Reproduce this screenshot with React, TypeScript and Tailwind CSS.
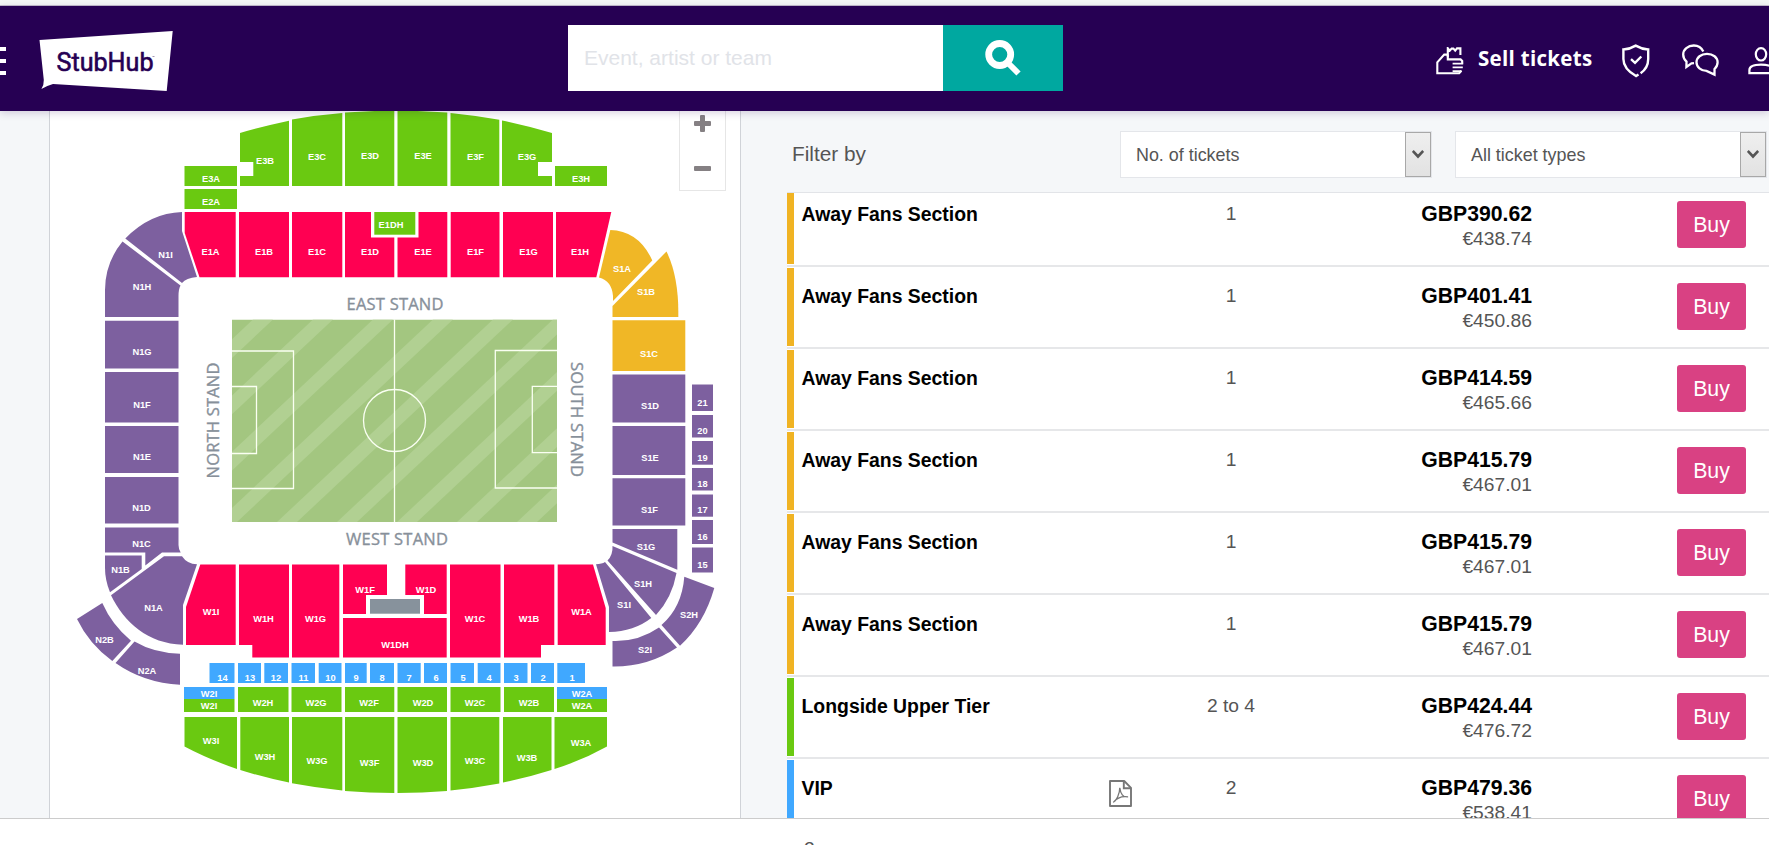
interface Section {
  name: string;
  d: string;
  x: number;
  y: number;
}

interface Listing {
  section: string;
  quantity: string;
  price: string;
  converted: string;
  color: string;
  pdf?: boolean;
}

const greenSections: Section[] = [
  { name: "E3A", d: "M184.5 166H237V186H184.5Z", x: 211, y: 182 },
  { name: "E2A", d: "M184.5 189H237V209H184.5Z", x: 211, y: 205 },
  { name: "E3B", d: "M240 133Q264 126 289 120.7V186H240V176H253.3V162H240Z", x: 265, y: 164 },
  { name: "E3C", d: "M292 119.5Q317 115 342.3 113V186H292Z", x: 317, y: 160 },
  { name: "E3D", d: "M345 112.5L394.3 110V186H345Z", x: 370, y: 159 },
  { name: "E3E", d: "M397.5 110L447.3 112.5V186H397.5Z", x: 423, y: 159 },
  { name: "E3F", d: "M450.5 113Q475 115.5 499.3 119.7V186H450.5Z", x: 475.5, y: 160 },
  { name: "E3G", d: "M502 120.5Q528 126 552 133V162H538V176H552V186H502Z", x: 527, y: 160 },
  { name: "E3H", d: "M555 166H607V186H555Z", x: 581, y: 182 },
  { name: "W2I", d: "M184 699H234.5V712H184Z", x: 209, y: 709 },
  { name: "W2H", d: "M238 687H288.5V712H238Z", x: 263, y: 706 },
  { name: "W2G", d: "M291.5 687H341.5V712H291.5Z", x: 316, y: 706 },
  { name: "W2F", d: "M345 687H394.3V712H345Z", x: 369, y: 706 },
  { name: "W2D", d: "M397.5 687H447V712H397.5Z", x: 423, y: 706 },
  { name: "W2C", d: "M450.5 687H500.5V712H450.5Z", x: 475, y: 706 },
  { name: "W2B", d: "M504 687H554V712H504Z", x: 529, y: 706 },
  { name: "W2A", d: "M557 699H607V712H557Z", x: 582, y: 709 },
  { name: "W3I", d: "M184.5 717H237V769Q208 759 184.5 746.5Z", x: 211, y: 744 },
  { name: "W3H", d: "M240.3 717H289V782.5Q264 777.5 240.3 770Z", x: 265, y: 760 },
  { name: "W3G", d: "M292 717H342.3V790.5Q317 788 292 783.3Z", x: 317, y: 764 },
  { name: "W3F", d: "M345 717H394.3V793Q370 793 345 791Z", x: 369.5, y: 766 },
  { name: "W3D", d: "M397.5 717H447V791Q422 793 397.5 793Z", x: 423, y: 766 },
  { name: "W3C", d: "M450.5 717H499.3V783.5Q475 788 450.5 790.5Z", x: 475, y: 764 },
  { name: "W3B", d: "M503 717H551.5V770Q528 777.5 503 782.5Z", x: 527, y: 761 },
  { name: "W3A", d: "M554.5 717H607V746.5Q583 760 554.5 769Z", x: 581, y: 746 },
];

const redSections: Section[] = [
  { name: "E1A", d: "M184.7 212H235.7V277.3H199.5L184.7 233Z", x: 210.5, y: 255 },
  { name: "E1B", d: "M239 212H289V277.3H239Z", x: 264, y: 255 },
  { name: "E1C", d: "M292 212H342.3V277.3H292Z", x: 317, y: 255 },
  { name: "E1D", d: "M345 212H371V237.5H394.3V277.3H345Z", x: 370, y: 255 },
  { name: "E1E", d: "M418.5 212H447.3V277.3H397.5V237.5H418.5Z", x: 423, y: 255 },
  { name: "E1F", d: "M450.7 212H499.5V277.3H450.7Z", x: 475.5, y: 255 },
  { name: "E1G", d: "M503 212H553V277.3H503Z", x: 528.5, y: 255 },
  { name: "E1H", d: "M556 212H611.3L596.3 277.3H556Z", x: 580, y: 255 },
  { name: "W1I", d: "M200.3 564.5H235.7V645H186V607Z", x: 211, y: 615 },
  { name: "W1H", d: "M239 564.5H289V657.5H252.3V645H239Z", x: 263.5, y: 622 },
  { name: "W1G", d: "M292 564.5H339.3V657.5H292Z", x: 315.5, y: 622 },
  { name: "W1F", d: "M343 564.5H387V595H366V614H343Z", x: 365, y: 593 },
  { name: "W1D", d: "M405.3 564.5H446.7V614H424V595H405.3Z", x: 426, y: 593 },
  { name: "W1DH", d: "M343 618H446.7V657.5H343Z", x: 395, y: 648 },
  { name: "W1C", d: "M450 564.5H500.5V657.5H450Z", x: 475, y: 622 },
  { name: "W1B", d: "M504 564.5H554.3V645H541V657.5H504Z", x: 529, y: 622 },
  { name: "W1A", d: "M557.7 564.5H593L605.7 608V645H557.7Z", x: 581.5, y: 615 },
];

const purpleSections: Section[] = [
  { name: "N1I", d: "M125.3 238.5Q150 213 182 212V231L197 277Q186 278 182 283Z", x: 165.5, y: 258 },
  { name: "N1H", d: "M122.5 241.5L180.5 285.5Q178.5 289 178.5 296V317H105V290Q105 263 122.5 241.5Z", x: 142, y: 290 },
  { name: "N1G", d: "M105 320.7H178.5V368.5H105Z", x: 142, y: 355 },
  { name: "N1F", d: "M105 372H178.5V422.5H105Z", x: 142, y: 408 },
  { name: "N1E", d: "M105 426H178.5V473H105Z", x: 142, y: 460 },
  { name: "N1D", d: "M105 477H178.5V523.5H105Z", x: 141.5, y: 511 },
  { name: "N1C", d: "M105 527.5H178.5V545Q178.5 549 180.7 552.5H162L145.3 565.5V552.5H105Z", x: 141.5, y: 547 },
  { name: "N1B", d: "M105 555.5H141.7V569L110 592.3Q105 580 105 568Z", x: 120.5, y: 573 },
  { name: "N1A", d: "M111 595.3L164 556.3H182Q187 564 197 564.3L183 605V644.7C148 644 124 622 111 595.3Z", x: 153.5, y: 611 },
  { name: "N2B", d: "M102.3 603L77 619Q89 644 112.3 661L131 640.7Q112 625 102.3 603Z", x: 104.5, y: 643 },
  { name: "N2A", d: "M134.5 641.5Q154 653 180 653.7V684.7Q144 683 115.5 663Z", x: 147, y: 674 },
  { name: "S1D", d: "M612.5 374.5H685.3V422.5H612.5Z", x: 650, y: 409 },
  { name: "S1E", d: "M612.5 426H685.3V475H612.5Z", x: 650, y: 461 },
  { name: "S1F", d: "M612.5 478.3H685.3V525.5H612.5Z", x: 649.5, y: 513 },
  { name: "S1G", d: "M612.5 529H677.3V569.7L612.5 542.5Z", x: 646, y: 550 },
  { name: "S1H", d: "M612.5 546L676.5 573Q672 598 656 615L607.5 560.5Q613 555 612.5 546Z", x: 643, y: 587 },
  { name: "S1I", d: "M596 564.3Q602 564 605 562L651.3 618Q634 631.5 609 632V607Z", x: 624, y: 608 },
  { name: "S2H", d: "M684.3 576.7L714.3 588Q704 624 680 645.7L661.5 625Q682 607 684.3 576.7Z", x: 689, y: 618 },
  { name: "S2I", d: "M612.5 641Q638 642 659 627.5L677 647.5Q648 667 612.5 666.5Z", x: 645, y: 653 },
  { name: "21", d: "M692 384.5H713V411H692Z", x: 702.5, y: 406 },
  { name: "20", d: "M692 415H713V437.5H692Z", x: 702.5, y: 434 },
  { name: "19", d: "M692 441H713V464.7H692Z", x: 702.5, y: 461 },
  { name: "18", d: "M692 468H713V490.5H692Z", x: 702.5, y: 487 },
  { name: "17", d: "M692 494.5H713V516.7H692Z", x: 702.5, y: 513 },
  { name: "16", d: "M692 520H713V544H692Z", x: 702.5, y: 540 },
  { name: "15", d: "M692 547.5H713V572.5H692Z", x: 702.5, y: 568 },
];

const orangeSections: Section[] = [
  { name: "S1A", d: "M610.3 230Q639 231 652.3 260.5L613 301V296Q612 281 599 277.5Z", x: 622, y: 272 },
  { name: "S1B", d: "M666.5 251.5Q679 277 678.3 317H612.5V306Z", x: 646, y: 295 },
  { name: "S1C", d: "M612.5 320.3H685.3V371H612.5Z", x: 649, y: 357 },
];

const blueSections: Section[] = [
  { name: "14", d: "M209.5 663H234.5V683H209.5Z", x: 222.5, y: 681 },
  { name: "13", d: "M238 663H261V683H238Z", x: 250, y: 681 },
  { name: "12", d: "M264.3 663H288V683H264.3Z", x: 276, y: 681 },
  { name: "11", d: "M291.5 663H315V683H291.5Z", x: 303.5, y: 681 },
  { name: "10", d: "M318.7 663H341.5V683H318.7Z", x: 330.5, y: 681 },
  { name: "9", d: "M345 663H366.7V683H345Z", x: 356, y: 681 },
  { name: "8", d: "M370 663H394V683H370Z", x: 382, y: 681 },
  { name: "7", d: "M397.5 663H420.7V683H397.5Z", x: 409, y: 681 },
  { name: "6", d: "M424 663H447V683H424Z", x: 436, y: 681 },
  { name: "5", d: "M450.5 663H474V683H450.5Z", x: 463, y: 681 },
  { name: "4", d: "M477.7 663H500.5V683H477.7Z", x: 489, y: 681 },
  { name: "3", d: "M504 663H527.5V683H504Z", x: 516, y: 681 },
  { name: "2", d: "M531 663H554V683H531Z", x: 543, y: 681 },
  { name: "1", d: "M557.3 663H585V683H557.3Z", x: 572, y: 681 },
  { name: "W2I", d: "M184 687H234.5V699H184Z", x: 209, y: 697 },
  { name: "W2A", d: "M557 687H607V699H557Z", x: 582, y: 697 },
];

const zones = [
  { fill: "#6ac911", sections: greenSections },
  { fill: "#ff0052", sections: redSections },
  { fill: "#7d609f", sections: purpleSections },
  { fill: "#f0b726", sections: orangeSections },
  { fill: "#40a8ff", sections: blueSections },
];

const listings: Listing[] = [
  { section: "Away Fans Section", quantity: "1", price: "GBP390.62", converted: "€438.74", color: "bg-[#f0b323]" },
  { section: "Away Fans Section", quantity: "1", price: "GBP401.41", converted: "€450.86", color: "bg-[#f0b323]" },
  { section: "Away Fans Section", quantity: "1", price: "GBP414.59", converted: "€465.66", color: "bg-[#f0b323]" },
  { section: "Away Fans Section", quantity: "1", price: "GBP415.79", converted: "€467.01", color: "bg-[#f0b323]" },
  { section: "Away Fans Section", quantity: "1", price: "GBP415.79", converted: "€467.01", color: "bg-[#f0b323]" },
  { section: "Away Fans Section", quantity: "1", price: "GBP415.79", converted: "€467.01", color: "bg-[#f0b323]" },
  { section: "Longside Upper Tier", quantity: "2 to 4", price: "GBP424.44", converted: "€476.72", color: "bg-[#6ac911]" },
  { section: "VIP", quantity: "2", price: "GBP479.36", converted: "€538.41", color: "bg-[#40a8ff]", pdf: true },
];

const Logo = () => (
  <svg width="134" height="61" viewBox="39 30 134 61" className="ml-[33px] mt-6 shrink-0">
    <path d="M39.5 40L172.7 31L166.7 91L53 84Q46 86 41.4 89Q44 85 43.8 80Z" fill="#fff" />
    <text
      x="56.5"
      y="70.5"
      textLength="97"
      lengthAdjust="spacingAndGlyphs"
      fontSize="26"
      fill="#260053"
      stroke="#260053"
      strokeWidth="0.6"
      strokeLinejoin="round"
      className="font-[Roboto,sans-serif]"
    >
      StubHub
    </text>
    <path d="M152.5 56.5H154.5" stroke="#8d7fa3" strokeWidth="0.8" />
  </svg>
);

const SearchIcon = () => (
  <svg width="36" height="36" viewBox="0 0 36 36" fill="none" stroke="#fff" strokeWidth="6.8">
    <circle cx="14.7" cy="14.5" r="11" />
    <path d="M23 23L33.5 33.5" strokeWidth="6" />
  </svg>
);

const SellIcon = () => (
  <svg width="28" height="28" viewBox="0 0 28 28" fill="none" stroke="#fff" strokeWidth="2.1">
    <path d="M11.8 10.2V1.2L13.8 3.6L15.6 1.6H17.4L19.2 3.6L21 1.4H24.4V8" />
    <path d="M11.8 7.6H8.2L1.3 15.4V26.2H23.2L25.4 23.8M11.8 7.6V12.4H24.6L26.2 14V16.6" />
    <path d="M16.6 16.6H27.2M16.6 20.4H26.8M16.6 24.2H25.6" strokeWidth="1.7" />
  </svg>
);

const ShieldIcon = () => (
  <svg width="28" height="34" viewBox="0 0 28 34" fill="none" stroke="#fff" strokeWidth="2.4">
    <path d="M16.5 30.5L14 32C6 27.5 1.4 22.5 1.4 15V5.5C6 5.3 10 3.8 13.7 1.6C17.5 3.8 21.5 5.3 26.2 5.5V15C26.2 21 24 25.5 18.6 29.2" />
    <path d="M9 15.2L13 18.8L19.3 12.5" />
  </svg>
);

const ChatIcon = () => (
  <svg width="37" height="33" viewBox="0 0 37 33" fill="none" stroke="#fff" strokeWidth="2.3">
    <path d="M21.3 7.6C19.5 3.7 16 1.5 11.8 1.5C6 1.5 1.2 5.3 1.2 10.5C1.2 13.5 2.5 15.8 4.5 17.6L4.4 23L9.5 19.4L12 19.2" />
    <path d="M25 9.8C19 9.8 14.5 13.5 14.5 18.3C14.5 23.2 19 26.9 24.5 26.9L32.5 30.6V25C34.6 23.2 35.6 21 35.6 18.3C35.6 13.5 31 9.8 25 9.8Z" />
  </svg>
);

const UserIcon = () => (
  <svg width="27" height="28" viewBox="0 0 27 28" fill="none" stroke="#fff" strokeWidth="2.2">
    <ellipse cx="13" cy="7.3" rx="5.2" ry="6.2" />
    <path d="M25 26.2H1.4V23C1.4 19.5 6 17.6 13 17.6C20 17.6 25 19.5 25 23Z" />
  </svg>
);

const PdfIcon = () => (
  <svg width="23" height="27" viewBox="0 0 23 27" fill="none" stroke="#777" strokeWidth="1.9">
    <path d="M1 1H15.2L22 7.8V26H1Z" strokeLinejoin="round" />
    <path d="M14.8 1V8.2H22" />
    <path d="M4.3 22.3C7.5 20.5 10.7 14 10.8 7.8C11.5 13.5 14 17.8 19 16.8C14 16 8 17.8 4.3 22.3Z" strokeWidth="1.3" />
  </svg>
);

const SeatMap = () => (
  <svg width="690" height="707" viewBox="50 111 690 707" className="block">
    <defs>
      <clipPath id="pitch">
        <rect x="232" y="319.5" width="325" height="202.5" />
      </clipPath>
    </defs>

    {zones.map((zone) =>
      zone.sections.map((s) => <path key={zone.fill + s.name} d={s.d} fill={zone.fill} />)
    )}
    <rect x="374.3" y="212" width="41" height="22.7" fill="#6ac911" />
    <rect x="370" y="599" width="50" height="14.7" fill="#87929c" />

    {/* Pitch */}
    <g clipPath="url(#pitch)">
      <rect x="232" y="319.5" width="325" height="202.5" fill="#a3c680" />
      {[0, 1, 2, 3, 4, 5, 6, 7, 8].map((i) => (
        <path
          key={i}
          d="M253 319.5H273L57 522H37Z"
          transform={`translate(${i * 60} 0)`}
          fill="#b1d092"
        />
      ))}
    </g>
    <g fill="none" stroke="#fafff2" strokeWidth="1.3">
      <path d="M394.5 319.5V522" />
      <circle cx="394.5" cy="420.5" r="31" />
      <path d="M232 351H293.5V488.5H232M232 386.5H256.5V453.5H232" />
      <path d="M557 350.5H495.3V488H557M557 386.3H532.3V452.7H557" />
    </g>

    <g
      fill="#87909a"
      stroke="#87909a"
      strokeWidth="0.35"
      fontSize="16.5"
      textAnchor="middle"
      className="font-['Open_Sans','Noto_Sans',sans-serif]"
    >
      <text x="395" y="310" textLength="97">EAST STAND</text>
      <text x="397" y="545.3" textLength="102">WEST STAND</text>
      <text transform="translate(218.7 420.5) rotate(-90)" textLength="116">NORTH STAND</text>
      <text transform="translate(571 419.5) rotate(90)" textLength="115">SOUTH STAND</text>
    </g>

    <g fill="#fff" fontSize="9.3" textAnchor="middle" className="font-['Liberation_Sans',Arial,sans-serif] font-bold">
      {zones.map((zone) =>
        zone.sections.map((s) => (
          <text key={zone.fill + s.name} x={s.x} y={s.y - 0.5}>
            {s.name}
          </text>
        ))
      )}
      <text x="391" y="227.5">E1DH</text>
    </g>
  </svg>
);

const Select = ({ label, width }: { label: string; width: string }) => (
  <div className={`flex h-[47px] items-center justify-between border border-[#e4e6ea] bg-white pl-[15px] ${width}`}>
    <span className="pt-px text-[17.9px] text-[#555]">{label}</span>
    <div className="flex h-[45px] w-[26px] items-center justify-center border border-[#a8a8a8] bg-linear-to-b from-[#efefef] to-[#e2e2e2]">
      <svg width="12" height="9" viewBox="0 0 12 9" fill="none" stroke="#555" strokeWidth="2.6">
        <path d="M0.8 1L6 6.5L11.2 1" />
      </svg>
    </div>
  </div>
);

const ListingRow = ({ section, quantity, price, converted, color, pdf }: Listing) => (
  <div className="h-[82px] bg-white">
    <div className="flex h-[78px]">
      <div className={`w-[7px] ${color}`} />
      <div className="w-[315px] pl-[7.5px] pt-[17px] text-[19.4px] leading-[22px] font-bold text-black">{section}</div>
      <div className="w-[72px] pt-[20px]">{pdf && <PdfIcon />}</div>
      <div className="w-[100px] pt-[17px] text-center text-[19.25px] leading-[22px] text-[#555]">{quantity}</div>
      <div className="w-[251px] pt-[15px] text-right leading-[25px]">
        <div className="text-[21.2px] font-bold text-black">{price}</div>
        <div className="text-[19.25px] text-[#555]">{converted}</div>
      </div>
      <button className="mt-[15px] ml-[145px] h-[47px] w-[69px] rounded-[3px] bg-[#d94183] pt-[2px] text-[21.3px] text-white">
        Buy
      </button>
    </div>
    <div className="mt-px h-0.5 bg-[#e6e7e9]" />
  </div>
);

export default function App() {
  return (
    <div className="flex h-[845px] w-[1769px] flex-col overflow-hidden bg-white font-['Liberation_Sans',Arial,sans-serif]">
      <div className="h-[6px] shrink-0 border-b border-[#c3bccb] bg-[#f4f7f6]" />

      {/* Header */}
      <header className="relative z-10 flex h-[105px] shrink-0 bg-[#260053] shadow-[0_2px_8px_rgba(38,0,83,0.18)]">
        <div className="mt-[41px] flex w-[6px] flex-col gap-2">
          <div className="h-[4px] bg-white" />
          <div className="h-[4px] bg-white" />
          <div className="h-[4px] bg-white" />
        </div>
        <Logo />

        <div className="mt-[19px] ml-[395px] flex h-[66px]">
          <input
            type="text"
            placeholder="Event, artist or team"
            className="w-[375px] bg-white pl-4 text-[21px] placeholder:text-[#e1e3e8]"
          />
          <button className="flex w-[120px] items-center justify-center bg-[#00a8a0]">
            <SearchIcon />
          </button>
        </div>

        <div className="mt-[37px] ml-[373px] flex items-start">
          <div className="mt-1">
            <SellIcon />
          </div>
          <span className="mt-px ml-[14px] w-[114px] text-[20.5px] leading-7 font-bold tracking-[0.3px] whitespace-nowrap text-white font-['Open_Sans',sans-serif]">
            Sell tickets
          </span>
          <div className="mt-px ml-[30px]">
            <ShieldIcon />
          </div>
          <div className="mt-px ml-[32px]">
            <ChatIcon />
          </div>
          <div className="mt-1 ml-[29px] w-[21px] overflow-hidden">
            <UserIcon />
          </div>
        </div>
      </header>

      <main className="flex h-[707px] shrink-0 overflow-hidden bg-[#f5f7f9]">
        <div className="relative ml-[49px] w-[692px] shrink-0 border-x border-[#d0d3d8] bg-white">
          <SeatMap />
          {/* Zoom controls */}
          <div className="absolute top-0 right-[14px] flex h-[80px] w-[47px] flex-col items-center border border-t-0 border-[#e6e6e6] bg-white pt-1">
            <svg width="17" height="62" viewBox="0 0 17 62" fill="#858083">
              <rect x="6" y="0" width="5" height="17" rx="1" />
              <rect x="0" y="6" width="17" height="5" rx="1" />
              <rect x="0" y="51" width="17" height="5" rx="1" />
            </svg>
          </div>
        </div>

        <div className="ml-[46px] flex w-[982px] shrink-0 flex-col">
          {/* Filters */}
          <div className="flex h-[81px] shrink-0 pt-5">
            <div className="w-[333px] pt-[11px] pl-[5px] text-[20.8px] leading-6 text-[#555]">Filter by</div>
            <Select label="No. of tickets" width="w-[312px]" />
            <div className="w-[23px]" />
            <Select label="All ticket types" width="w-[312px]" />
          </div>
          {/* The list is scrolled slightly past its first row */}
          <div className="min-h-0 flex-1 overflow-hidden border-t border-[#e2e4e8]">
            <div className="-mt-[7px]">
              {listings.map((listing, i) => (
                <ListingRow key={i} {...listing} />
              ))}
            </div>
          </div>
        </div>
      </main>

      <footer className="h-[27px] shrink-0 overflow-hidden border-t border-[#ccc] bg-white pt-[19px] pl-[804px] text-[19.25px] leading-[22px] text-[#555]">
        2
      </footer>
    </div>
  );
}
